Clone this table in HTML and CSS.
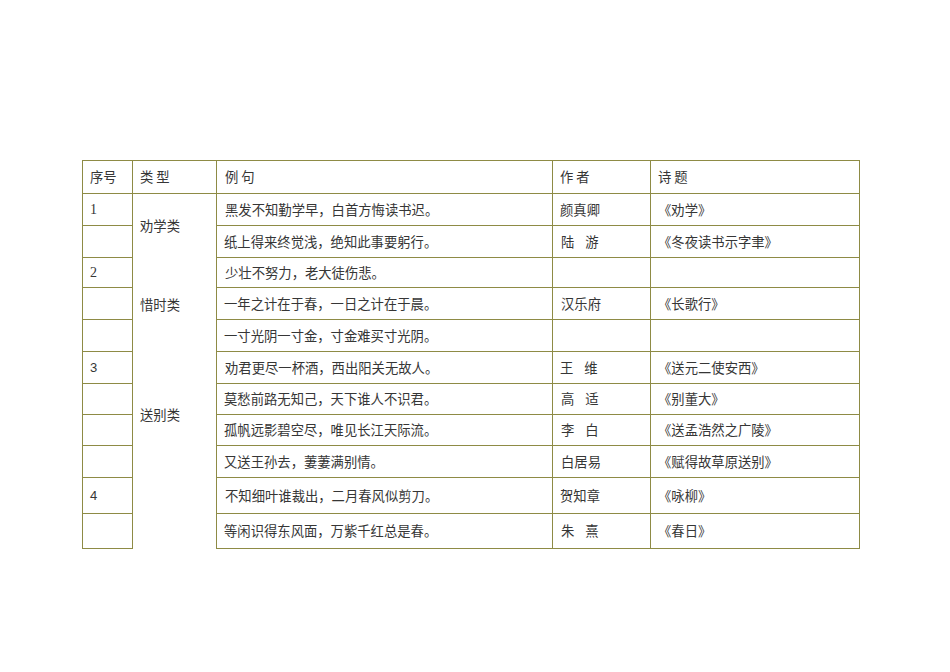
FILE: index.html
```html
<!DOCTYPE html>
<html lang="zh-CN">
<head>
<meta charset="utf-8">
<title>古诗分类表</title>
<link rel="stylesheet" href="styles.css">
</head>
<body>
<div class="page">
<table class="poems">
  <colgroup>
    <col class="c-no"><col class="c-type"><col class="c-line"><col class="c-author"><col class="c-title">
  </colgroup>
  <tr class="h33">
    <td>序号</td><td class="type head">类 型</td><td>例 句</td><td>作 者</td><td>诗 题</td>
  </tr>
  <tr class="h32">
    <td class="serif">1</td><td class="type" rowspan="2">劝学类</td><td>黑发不知勤学早，白首方悔读书迟。</td><td>颜真卿</td><td>《劝学》</td>
  </tr>
  <tr class="h32">
    <td></td><td>纸上得来终觉浅，绝知此事要躬行。</td><td>陆<span class="sp"></span>游</td><td>《冬夜读书示字聿》</td>
  </tr>
  <tr class="h30">
    <td class="serif">2</td><td class="type" rowspan="3">惜时类</td><td>少壮不努力，老大徒伤悲。</td><td></td><td></td>
  </tr>
  <tr class="h32">
    <td></td><td>一年之计在于春，一日之计在于晨。</td><td>汉乐府</td><td>《长歌行》</td>
  </tr>
  <tr class="h32">
    <td></td><td>一寸光阴一寸金，寸金难买寸光阴。</td><td></td><td></td>
  </tr>
  <tr class="h32">
    <td class="sans">3</td><td class="type" rowspan="4">送别类</td><td>劝君更尽一杯酒，西出阳关无故人。</td><td>王<span class="sp"></span>维</td><td>《送元二使安西》</td>
  </tr>
  <tr class="h31">
    <td></td><td>莫愁前路无知己，天下谁人不识君。</td><td>高<span class="sp"></span>适</td><td>《别董大》</td>
  </tr>
  <tr class="h31">
    <td></td><td>孤帆远影碧空尽，唯见长江天际流。</td><td>李<span class="sp"></span>白</td><td>《送孟浩然之广陵》</td>
  </tr>
  <tr class="h32">
    <td></td><td>又送王孙去，萋萋满别情。</td><td>白居易</td><td>《赋得故草原送别》</td>
  </tr>
  <tr class="h36">
    <td class="sans">4</td><td class="type" rowspan="2"></td><td>不知细叶谁裁出，二月春风似剪刀。</td><td>贺知章</td><td>《咏柳》</td>
  </tr>
  <tr class="h35">
    <td></td><td>等闲识得东风面，万紫千红总是春。</td><td>朱<span class="sp"></span>熹</td><td>《春日》</td>
  </tr>
</table>
</div>
</body>
</html>
```

FILE: styles.css
```css
html, body {
  margin: 0;
  padding: 0;
  background: #ffffff;
}

.page {
  padding: 160px 0 0 82px;
  width: 950px;
  height: 672px;
  box-sizing: border-box;
}

.poems {
  border-collapse: collapse;
  table-layout: fixed;
  width: 777px;
  font-family: "Noto Sans CJK SC", "Liberation Serif", sans-serif;
  font-size: 13.33px;
  color: #363636;
}

.c-no { width: 50px; }
.c-type { width: 84px; }
.c-line { width: 336px; }
.c-author { width: 98px; }
.c-title { width: 209px; }

.poems td {
  border: 1px solid #8e8b45;
  padding: 0 0 0 7px;
  vertical-align: middle;
  white-space: nowrap;
  line-height: 16px;
}

.poems td.type {
  border-top: none;
  border-bottom: none;
}

.poems td.type.head {
  border-top: 1px solid #8e8b45;
  border-bottom: 1px solid #8e8b45;
}

.poems td:nth-child(3) {
  padding-left: 8px;
}

.serif {
  font-family: "Liberation Serif", serif;
  font-size: 14px;
}

.sans {
  font-family: "Liberation Sans", sans-serif;
  font-size: 13px;
}

.sp {
  display: inline-block;
  width: 11px;
}

.h30 { height: 30px; }
.h31 { height: 31px; }
.h32 { height: 32px; }
.h33 { height: 33px; }
.h35 { height: 35px; }
.h36 { height: 36px; }
```
